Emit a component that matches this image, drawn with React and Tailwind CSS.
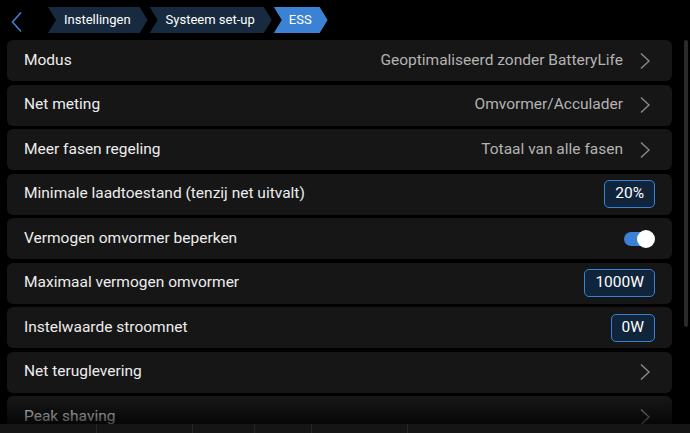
import React from "react";

const rows = [
  { label: "Modus", value: "Geoptimaliseerd zonder BatteryLife", type: "link" },
  { label: "Net meting", value: "Omvormer/Acculader", type: "link" },
  { label: "Meer fasen regeling", value: "Totaal van alle fasen", type: "link" },
  { label: "Minimale laadtoestand (tenzij net uitvalt)", value: "20%", type: "box" },
  { label: "Vermogen omvormer beperken", type: "switch" },
  { label: "Maximaal vermogen omvormer", value: "1000W", type: "box" },
  { label: "Instelwaarde stroomnet", value: "0W", type: "box" },
  { label: "Net teruglevering", type: "link" },
  { label: "Peak shaving", type: "link" },
];

function Chevron() {
  return (
    <svg width="12" height="18" viewBox="0 0 12 18" className="shrink-0">
      <path d="M2 1.5 L10 9 L2 16.5" fill="none" stroke="#8a8a8a" strokeWidth="1.4" />
    </svg>
  );
}

function Crumb({ text, active }) {
  return (
    <div
      className={`h-[26px] flex items-center text-[13px] text-white ${
        active ? "bg-[#3b82d4] pl-[15px] pr-[16px]" : "bg-[#172a40] pl-[16px] pr-[17px]"
      }`}
      style={{ clipPath: "polygon(0 0, calc(100% - 8px) 0, 100% 50%, calc(100% - 8px) 100%, 0 100%, 8px 50%)" }}
    >
      {text}
    </div>
  );
}

function Row({ row }) {
  return (
    <div className="h-[41px] shrink-0 rounded-[6px] bg-[#161616] flex items-center pl-[17px] pr-[21px]">
      <span className="flex-1 text-[15.5px] text-[#ededed]">{row.label}</span>
      {row.type === "link" && (
        <div className="flex items-center gap-[16px]">
          {row.value && <span className="text-[15.5px] text-[#b3b3b3]">{row.value}</span>}
          <Chevron />
        </div>
      )}
      {row.type === "box" && (
        <div className="h-[28px] px-[10px] -mr-[4px] flex items-center rounded-[5px] border-[1.5px] border-[#3b82d4] bg-[#10243b] text-[15.5px] text-white">
          {row.value}
        </div>
      )}
      {row.type === "switch" && (
        <div className="relative w-[31px] h-[16px] -mr-[4px]">
          <div className="absolute left-0 top-[1px] w-[28px] h-[14px] rounded-full bg-[#3b82d4]" />
          <div className="absolute right-0 top-[-1px] w-[18px] h-[18px] rounded-full bg-white" />
        </div>
      )}
    </div>
  );
}

export default function App() {
  return (
    <div className="w-[690px] h-[433px] bg-black overflow-hidden relative font-['Roboto',sans-serif]">
      {/* breadcrumb */}
      <div className="h-[40px] flex items-center">
        <svg width="14" height="22" viewBox="0 0 14 22" className="ml-[10px] mr-[24px] mt-[3px]">
          <path d="M11 1.5 L2.5 11 L11 20.5" fill="none" stroke="#3b82d4" strokeWidth="1.6" />
        </svg>
        <div className="flex items-center gap-[2px]">
          <Crumb text="Instellingen" />
          <Crumb text="Systeem set-up" />
          <Crumb text="ESS" active />
        </div>
      </div>

      <div className="flex h-[384px]">
        <div className="relative w-[672px] pl-[7px] flex flex-col gap-[3.5px] overflow-hidden">
          {rows.map((r) => (
            <Row key={r.label} row={r} />
          ))}
          <div className="absolute left-0 right-0 bottom-0 h-[26px] bg-gradient-to-b from-transparent to-black/70" />
        </div>
        <div className="ml-[12px] w-[4px] h-[287px] rounded-full bg-[#2a2a2a]" />
      </div>

      {/* bottom bar peeking */}
      <div className="h-[9px] flex bg-[#151515]">
        <div className="w-[97px] border-r border-[#262626]" />
        <div className="w-[96px] border-r border-[#262626]" />
        <div className="w-[62px] border-r border-[#262626]" />
        <div className="w-[57px] border-r border-[#262626]" />
        <div className="w-[96px] border-r border-[#262626]" />
        <div className="flex-1" />
      </div>
    </div>
  );
}
